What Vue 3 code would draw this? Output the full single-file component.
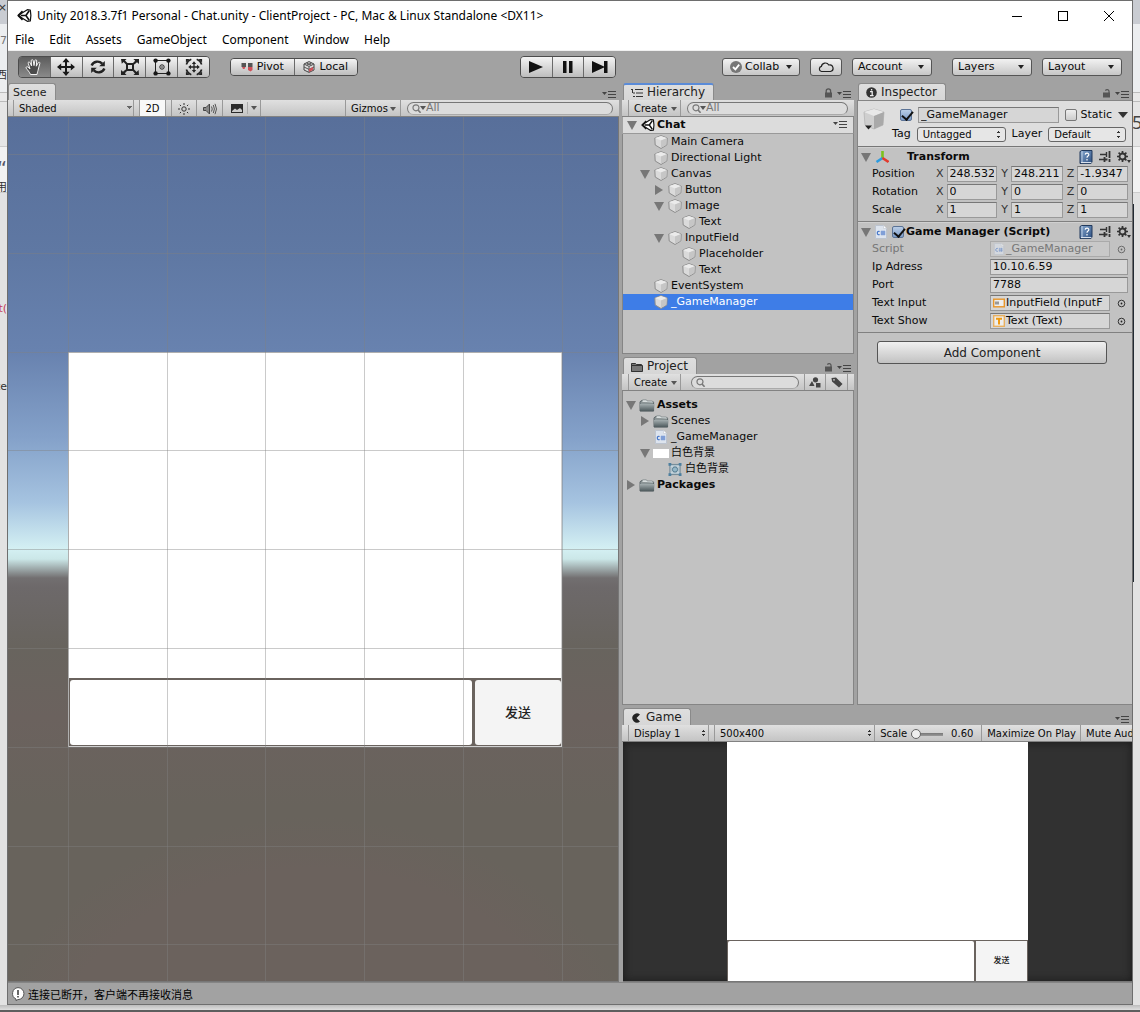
<script setup>
import { ref } from 'vue'

const menus = ['File', 'Edit', 'Assets', 'GameObject', 'Component', 'Window', 'Help']

const tools = ['hand', 'move', 'rotate', 'scale', 'rect', 'multi']
const activeTool = ref('hand')

const hierarchy = [
  { name: 'Main Camera', depth: 1 },
  { name: 'Directional Light', depth: 1 },
  { name: 'Canvas', depth: 1, arrow: 'open' },
  { name: 'Button', depth: 2, arrow: 'closed' },
  { name: 'Image', depth: 2, arrow: 'open' },
  { name: 'Text', depth: 3 },
  { name: 'InputField', depth: 2, arrow: 'open' },
  { name: 'Placeholder', depth: 3 },
  { name: 'Text', depth: 3 },
  { name: 'EventSystem', depth: 1 },
  { name: '_GameManager', depth: 1, selected: true },
]

const assets = [
  { name: 'Assets', depth: 0, arrow: 'open', icon: 'folder', bold: true },
  { name: 'Scenes', depth: 1, arrow: 'closed', icon: 'folder' },
  { name: '_GameManager', depth: 1, icon: 'csharp' },
  { name: '白色背景', depth: 1, arrow: 'open', icon: 'white' },
  { name: '白色背景', depth: 2, icon: 'sprite' },
  { name: 'Packages', depth: 0, arrow: 'closed', icon: 'folder', bold: true },
]

const transform = [
  { label: 'Position', x: '248.532', y: '248.211', z: '-1.9347' },
  { label: 'Rotation', x: '0', y: '0', z: '0' },
  { label: 'Scale', x: '1', y: '1', z: '1' },
]

const gridX = [60, 159, 257, 356, 455, 554]
const gridY = [37, 136, 235, 333, 432, 531, 630, 729, 827]
</script>

<template>
  <svg class="defs" aria-hidden="true">
    <defs>
      <linearGradient id="gFolder" x1="0" y1="0" x2="0" y2="1">
        <stop offset="0" stop-color="#a3adae" /><stop offset="1" stop-color="#4c585b" />
      </linearGradient>
      <linearGradient id="gBook" x1="0" y1="0" x2="1" y2="1">
        <stop offset="0" stop-color="#86a8d0" /><stop offset="1" stop-color="#2d4f80" />
      </linearGradient>
      <symbol id="unity" viewBox="0 0 16 16">
        <path d="M1 8 11 1.8 14.2 2.2 14.8 8 14.2 13.8 11 14.2Z" fill="#fff" stroke="#111" stroke-width="1.3" stroke-linejoin="round" />
        <path d="M1.500 8 6 3.500M1.500 8 6 12.500" stroke="#111" stroke-width="2" />
        <path d="M4 8H9.500M9.500 8 13 3M9.500 8 13 13" fill="none" stroke="#111" stroke-width="1.7" />
      </symbol>
      <symbol id="hand" viewBox="0 0 20 18">
        <path d="M6.5 16.5C5.6 14 3.4 12 2.2 10.2 1.6 9 3 8.3 4 9.1L6 11 4.2 5.2C3.9 3.8 5.5 3.4 6 4.7L7.6 8 7.2 2.8C7.2 1.4 8.9 1.2 9.2 2.6L10 7.6 10.9 2.6C11.2 1.3 12.9 1.5 12.7 3L12.3 8.2 14.2 4.8C14.9 3.7 16.3 4.3 15.8 5.6L14.4 11C14 13 13.4 14 13 16.5Z" fill="#4b4b4b" stroke="#f2f2f2" stroke-width="1" />
      </symbol>
      <symbol id="move" viewBox="0 0 18 18">
        <path d="M9 0 12.6 4.2H10V8H13.8V5.4L18 9 13.8 12.6V10H10V13.8H12.6L9 18 5.4 13.8H8V10H4.2V12.6L0 9 4.2 5.4V8H8V4.2H5.4Z" fill="#181818" />
      </symbol>
      <symbol id="rotate" viewBox="0 0 18 18">
        <path d="M2.6 7.500C4.400 3.200 10 2.400 13.2 5.6" fill="none" stroke="#222" stroke-width="2.4" />
        <path d="M15.8 3V8.2H10.200Z" fill="#222" />
        <path d="M15.4 10.500C13.600 14.800 8 15.600 4.8 12.4" fill="none" stroke="#222" stroke-width="2.4" />
        <path d="M2.2 15V9.8H7.800Z" fill="#222" />
      </symbol>
      <symbol id="scale" viewBox="0 0 18 18">
        <rect x="6" y="6" width="6" height="6" fill="none" stroke="#222" stroke-width="2" />
        <path d="M0 1H5.6L4 2.6 6.4 5 5 6.4 2.6 4 .8 5.8ZM18 1V6L16 4.2 13.4 6.4 12 5 14.2 2.8 12.4 1ZM0 17V12L2 13.8 4.6 11.6 6 13 3.8 15.2 5.6 17ZM18 17H12.4L14 15.4 11.8 13 13.2 11.6 15.6 14 17.6 12Z" fill="#222" />
      </symbol>
      <symbol id="rect" viewBox="0 0 18 18">
        <rect x="2.5" y="2.5" width="13" height="13" fill="none" stroke="#222" />
        <g fill="#181818"><circle cx="2.6" cy="2.6" r="2.2" /><circle cx="15.4" cy="2.6" r="2.2" /><circle cx="2.6" cy="15.4" r="2.2" /><circle cx="15.4" cy="15.4" r="2.2" /></g>
        <circle cx="9" cy="9" r="2.2" fill="none" stroke="#222" /><circle cx="9" cy="9" r=".7" />
      </symbol>
      <symbol id="multi" viewBox="0 0 20 20">
        <path d="M10 3.6 12.4 6.6H10.7V9.3H13.4V7.6L16.4 10 13.4 12.4V10.7H10.7V13.4H12.4L10 16.4 7.6 13.4H9.3V10.7H6.6V12.4L3.6 10 6.6 7.6V9.3H9.3V6.6H7.6Z" fill="#222" />
        <path d="M1.500 7.2C2.4 4.500 4.400 2.400 7 1.500M13 1.500C15.6 2.400 17.6 4.500 18.500 7.2M18.500 12.8C17.6 15.5 15.6 17.6 13 18.500M7 18.500C4.400 17.6 2.4 15.5 1.500 12.8" fill="none" stroke="#222" stroke-width="1.8" />
        <path d="M1 1H5L1 5ZM19 1V5L15 1ZM1 19V15L5 19ZM19 19H15L19 15Z" fill="#222" />
      </symbol>
      <symbol id="cube" viewBox="0 0 14 14">
        <path d="M7 .6 13.2 3 12.8 10 7 13.5 1.2 10 .8 3Z" fill="#dadada" stroke="#8c8c8c" />
        <path d="M7 .9 13 3.1 7 5.6 1 3.1Z" fill="#ebebeb" />
        <path d="M7 5.6 12.8 3.2 12.4 9.8 7 13Z" fill="#c6c6c6" />
      </symbol>
      <symbol id="menu" viewBox="0 0 14 8">
        <path d="M0 2H5L2.5 5Z" fill="#444" /><path d="M6 1.5H14M6 4.5H14M6 7.5H14" stroke="#444" />
      </symbol>
      <symbol id="lock" viewBox="0 0 9 10">
        <path d="M2.2 5V3A2.2 2.2 0 0 1 6.6 3V5" fill="none" stroke="#555" stroke-width="1.3" /><rect x="1" y="4.5" width="7" height="5" fill="#555" />
      </symbol>
      <symbol id="unlock" viewBox="0 0 9 10">
        <path d="M3.4 2.6A2 2 0 0 1 7 3V5" fill="none" stroke="#555" stroke-width="1.2" /><rect x="1" y="4.5" width="7" height="5" fill="#555" />
      </symbol>
      <symbol id="lens" viewBox="0 0 12 9">
        <circle cx="4" cy="3.800" r="3" fill="none" stroke="#777" stroke-width="1.2" /><path d="M6 6 8.600 8.800" stroke="#777" stroke-width="1.6" />
      </symbol>
      <symbol id="folder" viewBox="0 0 16 13">
        <path d="M1 12V3L2 1.8H6L7 3H14.6V12Z" fill="url(#gFolder)" stroke="#485255" stroke-width=".8" />
        <path d="M2.6 3.4 3.6.8H7.4L8.2 2H13.4L14.6 4Z" fill="#d8dede" stroke="#6a7476" stroke-width=".6" />
        <path d="M.8 5H15.4L14.8 12.2H1.2Z" fill="url(#gFolder)" />
      </symbol>
      <symbol id="csharp" viewBox="0 0 12 14">
        <path d="M.5 .5H8.5L11.5 3.5V13.5H.5Z" fill="#dde4ee" stroke="#bcc4d0" />
        <path d="M8.5 .5V3.5H11.5" fill="#fff" stroke="#c6ccd6" stroke-width=".7" />
        <path d="M4.600 6.4A1.6 1.8 0 1 0 4.600 9.600" fill="none" stroke="#3d6fc6" stroke-width="1.1" />
        <path d="M7 5.6V10.4M9 5.6V10.4M5.600 7H10.4M5.600 9H10.4" fill="none" stroke="#3d6fc6" stroke-width=".7" />
      </symbol>
      <symbol id="sprite" viewBox="0 0 16 14">
        <rect x="2.5" y="1.5" width="11" height="11" fill="#b4c6cf" stroke="#6d8592" />
        <path d="M3 2 13 12M13 2 3 12" stroke="#dbe5ea" /><circle cx="8" cy="7" r="2.8" fill="#94b7c8" stroke="#51788d" />
        <g fill="#4c7f9f"><rect x="1" width="3" height="3" /><rect x="12" width="3" height="3" /><rect x="1" y="11" width="3" height="3" /><rect x="12" y="11" width="3" height="3" /></g>
      </symbol>
      <symbol id="book" viewBox="0 0 14 14">
        <path d="M1 1.5 3 .5H13V12L12 13.5H1Z" fill="url(#gBook)" stroke="#20395c" />
        <path d="M3 1V12.5" stroke="#d4e0ee" stroke-width=".8" /><path d="M2 12.6H12.4" stroke="#e8eef5" />
        <path d="M6.2 4.6C6.4 2.6 10 2.8 9.8 4.8 9.7 6.2 8 6 8 7.8M8 9V10.4" fill="none" stroke="#fff" stroke-width="1.2" />
      </symbol>
      <symbol id="preset" viewBox="0 0 12 12">
        <path d="M1 3.500H7M7.500 1V6M0 8.500H5" stroke="#333" stroke-width="1.4" fill="none" />
        <path d="M10.500 0V7M5.500 6V11M6 8.500H8.500M10.500 8V11" stroke="#333" stroke-width="1.8" fill="none" />
      </symbol>
      <symbol id="gear" viewBox="0 0 14 12">
        <circle cx="5.5" cy="5.5" r="3" fill="none" stroke="#333" stroke-width="1.8" />
        <path d="M5.5 0V2M5.5 9V11M0 5.5H2M9 5.5H11M1.6 1.6 3 3M8 8 9.4 9.4M9.4 1.6 8 3M3 8 1.6 9.4" stroke="#333" stroke-width="1.7" />
        <path d="M10 9H14L12 12Z" fill="#333" />
      </symbol>
      <symbol id="picker" viewBox="0 0 9 9">
        <circle cx="4.5" cy="4.5" r="3.3" fill="none" stroke="#333" /><circle cx="4.5" cy="4.5" r=".9" fill="#222" />
      </symbol>
    </defs>
  </svg>

  <div class="desktop">
    <div class="edge left" aria-hidden="true">
      <i class="bit b1">×</i><i class="bit b2">7</i><i class="bit b3">西</i>
      <i class="bit b4">“</i><i class="bit b5">用</i><i class="bit b6">t(</i><i class="bit b7">te</i>
    </div>

    <main class="window">
      <header class="titlebar">
        <svg class="logo"><use href="#unity" /></svg>
        <h1>Unity 2018.3.7f1 Personal - Chat.unity - ClientProject - PC, Mac &amp; Linux Standalone &lt;DX11&gt;</h1>
        <button class="winbtn" aria-label="Minimize"><svg width="10" height="10"><path d="M0 5.5H10" stroke="#000" /></svg></button>
        <button class="winbtn" aria-label="Maximize"><svg width="10" height="10"><rect x=".5" y=".5" width="9" height="9" fill="none" stroke="#000" /></svg></button>
        <button class="winbtn" aria-label="Close"><svg width="10" height="10"><path d="M0 0 10 10M10 0 0 10" stroke="#000" /></svg></button>
      </header>

      <nav class="menubar">
        <button v-for="m in menus" :key="m">{{ m }}</button>
      </nav>

      <div class="toolbar">
        <div class="side">
          <div class="group tall toolset">
            <button v-for="t in tools" :key="t" :class="{ on: activeTool === t }" :aria-label="t" @click="activeTool = t">
              <svg class="tool"><use :href="'#' + t" /></svg>
            </button>
          </div>
          <div class="group pivot">
            <button>
              <svg width="12" height="10"><path d="M.5 1H5V5H.5ZM7 1H11.500V5H7Z" fill="#555" /><path d="M1 5H4.500L3.500 7H2ZM7 5H11.500V8L9.500 9.500 7 8Z" fill="#d05058" /></svg>
              Pivot
            </button>
            <button>
              <svg width="12" height="12"><path d="M6 .6 11 3V9L6 11.400 1 9V3Z" fill="#ddd" stroke="#444" /><path d="M1 3 6 5.400 11 3M6 5.400V11M3.500 2 8.500 4.200M8.500 2 3.500 4.200M1 6 6 8.400 11 6" stroke="#555" fill="none" /><path d="M6 8 10 6V9L6 11Z" fill="#d05058" /></svg>
              Local
            </button>
          </div>
        </div>
        <div class="group tall play">
          <button aria-label="Play"><svg width="16" height="14"><path d="M1 1 15 7 1 13Z" fill="#111" /></svg></button>
          <button aria-label="Pause"><svg width="10" height="12"><path d="M0 0H3.500V12H0ZM6 0H9.500V12H6Z" fill="#111" /></svg></button>
          <button aria-label="Step"><svg width="16" height="14"><path d="M0 1 12 6.500V1H15.500V13H12V7.500L0 13Z" fill="#111" /></svg></button>
        </div>
        <div class="side end">
          <button class="pill collab">
            <svg width="12" height="12"><circle cx="6" cy="6" r="6" fill="#777" /><path d="M3 6 5.400 8.400 9.200 3.600" fill="none" stroke="#fff" stroke-width="1.800" /></svg>
            Collab <b class="caret"></b>
          </button>
          <button class="pill cloud" aria-label="Services">
            <svg width="16" height="12"><path d="M3.500 10.500A2.600 2.600 0 0 1 3.400 5.400 4 4 0 0 1 10.800 4 3.300 3.300 0 0 1 12.500 10.500Z" fill="none" stroke="#222" stroke-width="1.200" /></svg>
          </button>
          <button class="pill menu-pill">Account <b class="caret"></b></button>
          <button class="pill menu-pill layers">Layers <b class="caret"></b></button>
          <button class="pill menu-pill">Layout <b class="caret"></b></button>
        </div>
      </div>

      <div class="docks">
        <section class="pane">
          <div class="tabs first"><h2 class="tab scene-tab">Scene</h2><svg class="pane-menu"><use href="#menu" /></svg></div>
          <div class="bar">
            <select class="flat shaded" aria-label="Draw mode"><option>Shaded</option></select>
            <button class="flat two-d">2D</button>
            <button class="flat ico sep-left" aria-label="Lighting">
              <svg width="12" height="12"><circle cx="6" cy="6" r="2.200" fill="none" stroke="#333" /><path d="M6 0V2M6 10V12M0 6H2M10 6H12M1.800 1.800 3 3M9 9 10.200 10.200M10.200 1.800 9 3M3 9 1.800 10.200" stroke="#333" /></svg>
            </button>
            <button class="flat ico" aria-label="Audio">
              <svg width="14" height="12"><path d="M.5 4.500H3L6.500 1V11L3 7.500H.5Z" fill="#888" stroke="#444" /><path d="M8.500 3.500Q10 6 8.500 8.500M10.300 2Q12.500 6 10.300 10M12 .8Q15 6 12 11.200" fill="none" stroke="#555" /></svg>
            </button>
            <button class="flat fx" aria-label="Effects">
              <svg width="12" height="9"><rect width="12" height="9" fill="#2b2b2b" /><path d="M1 7 4 4.500 6 6 9 4 11 6V8H1Z" fill="#ccc" /></svg>
              <span class="fx-more"><b class="caret small"></b></span>
            </button>
            <span class="grow"></span>
            <button class="flat gizmos">Gizmos <b class="caret small"></b></button>
            <label class="search scene-search"><svg><use href="#lens" /></svg><b class="caret small"></b><input type="text" placeholder="All" aria-label="Search scene"></label>
          </div>
          <div class="scene-view">
            <div class="ui-canvas">
              <div class="ui-image"></div>
              <div class="ui-row">
                <input class="ui-field" type="text" aria-label="Message">
                <button class="ui-send">发送</button>
              </div>
            </div>
            <svg class="grid" aria-hidden="true">
              <line v-for="x in gridX" :key="'x' + x" :x1="x" :x2="x" y1="0" y2="100%" />
              <line v-for="y in gridY" :key="'y' + y" :y1="y" :y2="y" x1="0" x2="100%" />
            </svg>
          </div>
        </section>

        <div class="right">
          <div class="upper">
            <div class="stack">
              <section class="pane">
                <div class="tabs">
                  <h2 class="tab focus">
                    <svg width="12" height="10"><path d="M0 1.500H2M4 1.500H12M2 5H4M5 5H12M2 8.500H4M5 8.500H12M1.500 2V5" stroke="#333" /></svg>Hierarchy
                  </h2>
                  <svg class="lock"><use href="#lock" /></svg><svg class="pane-menu"><use href="#menu" /></svg>
                </div>
                <div class="bar">
                  <button class="flat create">Create <b class="caret small"></b></button>
                  <label class="search"><svg><use href="#lens" /></svg><b class="caret small"></b><input type="text" placeholder="All" aria-label="Search hierarchy"></label>
                </div>
                <div class="scene-root">
                  <i class="arrow open"></i><svg class="unity-small"><use href="#unity" /></svg><span>Chat</span>
                  <svg class="pane-menu"><use href="#menu" /></svg>
                </div>
                <ul class="tree">
                  <li v-for="(n, i) in hierarchy" :key="i" :class="['d' + n.depth, { selected: n.selected }]">
                    <i class="arrow" :class="n.arrow"></i><svg class="cube"><use href="#cube" /></svg>{{ n.name }}
                  </li>
                </ul>
              </section>

              <section class="pane">
                <div class="tabs">
                  <h2 class="tab">
                    <svg width="12" height="10"><path d="M.5 9.500V1.500H4.500L5.500 2.500H10.500V4" fill="#777" stroke="#333" /><path d="M.5 3.500H11.500V9.500H.5Z" fill="#777" stroke="#333" /></svg>Project
                  </h2>
                  <svg class="lock"><use href="#unlock" /></svg><svg class="pane-menu"><use href="#menu" /></svg>
                </div>
                <div class="bar">
                  <button class="flat create">Create <b class="caret small"></b></button>
                  <label class="search proj"><svg><use href="#lens" /></svg><input type="text" aria-label="Search project"></label>
                  <button class="flat sq" aria-label="Search by type"><svg width="12" height="11"><circle cx="6.500" cy="2.800" r="2.600" fill="#444" /><path d="M0 9 3 4 5.500 9Z" fill="#444" /><rect x="7" y="6" width="4.500" height="4.500" fill="#444" /></svg></button>
                  <button class="flat sq" aria-label="Search by label"><svg width="12" height="11"><path d="M.5 1 5 .5 11.500 7 8 10.500 1 4.500Z" fill="#444" /><circle cx="3" cy="2.800" r=".9" fill="#ccc" /></svg></button>
                </div>
                <ul class="tree project">
                  <li v-for="(a, i) in assets" :key="i" :class="['d' + a.depth, { bold: a.bold }]">
                    <i class="arrow" :class="a.arrow"></i>
                    <span v-if="a.icon === 'white'" class="thumb"></span>
                    <svg v-else :class="a.icon"><use :href="'#' + a.icon" /></svg>{{ a.name }}
                  </li>
                </ul>
              </section>
            </div>

            <section class="pane">
              <div class="tabs">
                <h2 class="tab">
                  <svg width="11" height="11"><circle cx="5.500" cy="5.500" r="5.300" fill="#333" /><path d="M4 4.700H6.200V8.500M4 8.600H7.600M5.600 2V3.400" stroke="#eee" stroke-width="1.300" fill="none" /></svg>Inspector
                </h2>
                <svg class="lock"><use href="#unlock" /></svg><svg class="pane-menu"><use href="#menu" /></svg>
              </div>
              <div class="inspector">
                <div class="object-head">
                  <div class="big-cube"><svg width="24" height="24" viewBox="0 0 24 24"><path d="M12 1 22 4 21 17 12 21 3 17 2 4Z" fill="#cfcfcf" stroke="#aaa" stroke-width=".6" /><path d="M12 1 22 4 12 8 2 4Z" fill="#e8e8e8" /><path d="M12 8 22 4 21 17 12 21Z" fill="#a9a9a9" /><path d="M3 17.500H10L6.500 21.500Z" fill="#222" /></svg></div>
                  <div class="object-lines">
                    <div class="line">
                      <input class="check" type="checkbox" checked aria-label="Active">
                      <input class="field name" type="text" value="_GameManager" aria-label="Name">
                      <label class="static"><input class="check" type="checkbox">Static</label><b class="caret big"></b>
                    </div>
                    <div class="line second">
                      <label for="tag">Tag</label><select id="tag" class="popup tag"><option>Untagged</option></select>
                      <label for="layer">Layer</label><select id="layer" class="popup layer"><option>Default</option></select>
                    </div>
                  </div>
                </div>

                <div class="component">
                  <div class="comp-head">
                    <i class="arrow open"></i>
                    <svg class="axes" width="15" height="14"><path d="M7.500 8V1" stroke="#7cc21c" stroke-width="2.600" /><path d="M7.500 8 1.500 12" stroke="#2c9be0" stroke-width="2.600" /><path d="M7.500 8 13.500 12" stroke="#e23b2e" stroke-width="2.600" /></svg>
                    <h3 class="plain">Transform</h3>
                    <svg class="book"><use href="#book" /></svg><svg class="preset"><use href="#preset" /></svg><svg class="gear"><use href="#gear" /></svg>
                  </div>
                  <div v-for="r in transform" :key="r.label" class="prop">
                    <span class="label vec">{{ r.label }}</span>
                    <label class="axis">X<input class="field" type="text" :value="r.x"></label>
                    <label class="axis">Y<input class="field" type="text" :value="r.y"></label>
                    <label class="axis">Z<input class="field" type="text" :value="r.z"></label>
                  </div>
                </div>

                <div class="component">
                  <div class="comp-head">
                    <i class="arrow open"></i><svg class="script"><use href="#csharp" /></svg>
                    <input class="check" type="checkbox" checked aria-label="Enabled">
                    <h3>Game Manager (Script)</h3>
                    <svg class="book"><use href="#book" /></svg><svg class="preset"><use href="#preset" /></svg><svg class="gear"><use href="#gear" /></svg>
                  </div>
                  <div class="prop dim">
                    <span class="label">Script</span>
                    <button class="field object" disabled><svg class="mini"><use href="#csharp" /></svg>_GameManager</button>
                    <svg class="picker"><use href="#picker" /></svg>
                  </div>
                  <div class="prop"><label class="label" for="ip">Ip Adress</label><input id="ip" class="field" type="text" value="10.10.6.59"></div>
                  <div class="prop"><label class="label" for="port">Port</label><input id="port" class="field" type="text" value="7788"></div>
                  <div class="prop">
                    <span class="label">Text Input</span>
                    <button class="field object"><svg class="mini" viewBox="0 0 12 12"><rect x=".7" y="2.200" width="10.600" height="7.600" fill="#eee" stroke="#e8962a" stroke-width="1.400" /><path d="M3 4.500V7.500M5 4.500V7.500" stroke="#444" /></svg>InputField (InputF</button>
                    <svg class="picker"><use href="#picker" /></svg>
                  </div>
                  <div class="prop">
                    <span class="label">Text Show</span>
                    <button class="field object"><svg class="mini" viewBox="0 0 12 12"><rect x=".7" y=".7" width="10.600" height="10.600" fill="#eee" stroke="#e8b060" stroke-width="1.400" /><path d="M3 3.800H9M6 3.800V9.500" stroke="#f09a10" stroke-width="2" /></svg>Text (Text)</button>
                    <svg class="picker"><use href="#picker" /></svg>
                  </div>
                </div>
                <button class="add">Add Component</button>
              </div>
            </section>
          </div>

          <section class="pane">
            <div class="tabs">
              <h2 class="tab">
                <svg width="11" height="10"><path d="M9 1.500A4.600 4.600 0 1 0 9 8.500L5.500 5Z" fill="#222" /></svg>Game
              </h2>
              <svg class="pane-menu"><use href="#menu" /></svg>
            </div>
            <div class="bar game-bar">
              <select class="flat updown display" aria-label="Display"><option>Display 1</option></select>
              <select class="flat updown size" aria-label="Resolution"><option>500x400</option></select>
              <label class="flat zoom">Scale <input type="range" min="0" max="100" value="0"><output>0.60</output></label>
              <button class="flat">Maximize On Play</button>
              <button class="flat mute">Mute Audio</button>
            </div>
            <div class="game-view">
              <div class="game-canvas">
                <div class="game-image"></div>
                <div class="game-row">
                  <input class="game-field" type="text" aria-label="Message">
                  <button class="game-send">发送</button>
                </div>
              </div>
            </div>
          </section>
        </div>
      </div>

      <footer class="status">
        <svg width="14" height="14"><path d="M7 .6A6 6 0 1 1 6.900 12.600L5 13.600V12A6 6 0 0 1 7 .6Z" fill="#fff" stroke="#555" /><path d="M7 3V8M7 9V10.500" stroke="#444" stroke-width="1.600" /></svg>
        连接已断开，客户端不再接收消息
      </footer>
    </main>

    <div class="edge rightside" aria-hidden="true"><i class="bit r1">5</i><i class="dark"></i></div>
    <div class="below" aria-hidden="true"></div>
  </div>
</template>

<style>
body { margin: 0; background: #e6e6e6; }
</style>

<style scoped>
* { box-sizing: border-box; }
.defs { position: absolute; width: 0; height: 0; }
.desktop {
  display: grid; grid-template-columns: 7px minmax(0, 1fr) 7px; grid-template-rows: 1fr 7px;
  min-height: 100vh; overflow: hidden; background: #e6e6e6;
  font: 11px/16px "DejaVu Sans", Verdana, "Noto Sans CJK SC", sans-serif; color: #0a0a0a;
}
button, input, select { font: inherit; color: inherit; margin: 0; padding: 0; border: 0; background: none; border-radius: 0; outline: 0; min-width: 0; }
select { appearance: none; }
svg { flex: none; display: block; }
h1, h2, h3, ul { margin: 0; padding: 0; font-size: inherit; font-weight: normal; }

.edge { position: relative; overflow: hidden; background: linear-gradient(#c9ccd2 24px, #eceef0 24px, #eceef0 92px, #bbb 92px, #bbb 93px, #e9e9e9 93px, #e9e9e9 101px, #bbb 101px, #bbb 102px, #e6e6e6 102px, #e6e6e6 146px, #ccc 146px, #ccc 147px, #f2f2f2 147px, #f2f2f2 192px, #ccc 192px, #ccc 193px, #e2e2e2 193px); }
.bit { position: absolute; right: 0; font-style: normal; color: #333; white-space: nowrap; }
.b1 { top: 0; } .b2 { top: 33px; color: #777; } .b3 { top: 68px; }
.b4 { top: 160px; font-size: 20px; color: #556; } .b5 { top: 180px; } .b6 { top: 301px; color: #c33a5a; } .b7 { top: 379px; }
.r1 { top: 114px; left: -1px; right: auto; font-family: "Noto Sans", sans-serif; font-size: 18px; color: #444; }
.dark { position: absolute; left: 0; top: 204px; width: 1px; height: 378px; background: #222a33; }
.below { grid-column: 1 / -1; background: linear-gradient(#bdbdbd, #dedede 5px, #5e5e5e 5px); }

.window { display: flex; flex-direction: column; min-width: 0; border: 1px solid #6e6e6e; background: #a2a2a2; }
.titlebar { display: flex; align-items: center; height: 29px; background: #fff; padding-left: 9px; }
.logo { width: 15px; height: 15px; }
h1 { flex: 1; margin-left: 5px; font: 12px/16px "Noto Sans", "Segoe UI", sans-serif; color: #000; white-space: nowrap; overflow: hidden; }
.winbtn { width: 46px; height: 29px; display: flex; align-items: center; justify-content: center; }
.menubar { display: flex; gap: 15px; height: 21px; padding: 0 7px; background: #fff; border-bottom: 1px solid #f0f0f0; font: 12px/20px "Noto Sans", "Segoe UI", sans-serif; color: #000; }

.toolbar { display: flex; align-items: center; height: 32px; padding: 0 10px; }
.side { flex: 1; display: flex; align-items: center; gap: 20px; }
.side.end { justify-content: flex-end; gap: 10px; }
.group { display: flex; border: 1px solid #4c4c4c; border-radius: 4px; height: 18px; overflow: hidden; }
.group button { display: flex; align-items: center; justify-content: center; gap: 4px; flex: 1; border-left: 1px solid #6a6a6a; background: linear-gradient(#f4f4f4, #bdbdbd); }
.group button:first-child { border-left: 0; }
.group.tall { height: 22px; }
.group button.on { background: linear-gradient(#5c5c5c, #8a8a8a); }
.toolset { width: 192px; }
.pivot { width: 128px; }
.play { width: 96px; margin-right: 4px; }
.tool { width: 20px; height: 18px; }
.pill { display: flex; align-items: center; height: 18px; border: 1px solid #555; border-radius: 3px; background: linear-gradient(#f2f2f2, #c6c6c6); padding: 0 7px 0 5px; gap: 3px; }
.collab { width: 78px; padding-left: 7px; }
.cloud { width: 32px; padding: 0 7px; }
.menu-pill { width: 80px; }
.layers { margin-left: 10px; }
.caret { margin-left: auto; border: 3px solid transparent; border-top: 4px solid #222; border-bottom: 0; }
.caret.small { border-width: 4px 3px 0; border-top-color: #555; }
.caret.big { border-width: 6px 5px 0; border-top-color: #333; }

.docks { flex: 1; display: grid; grid-template-columns: 611fr 510fr; gap: 3px; }
.right { display: flex; flex-direction: column; gap: 3px; min-width: 0; }
.right > .pane { height: 274px; }
.upper { flex: 1; display: grid; grid-template-columns: 232fr 275fr; gap: 3px; }
.stack { display: grid; grid-template-rows: 271fr 348fr; gap: 3px; min-width: 0; }
.pane { display: flex; flex-direction: column; min-width: 0; }
.tabs { display: flex; align-items: flex-end; height: 17px; padding: 0 3px 0 1px; }
.tabs.first { padding-left: 0; }
.tab { display: flex; align-items: center; gap: 4px; height: 17px; margin-right: auto; padding: 1px 8px 0 7px; border: 1px solid #8a8a8a; border-bottom: 0; border-radius: 3px 3px 0 0; background: linear-gradient(#dedede, #d6d6d6); color: #222; font-size: 12px; line-height: 15px; }
.scene-tab { padding-left: 4px; font-size: 11px; }
.focus { border-top: 2px solid #5a8bd8; padding-top: 0; }
.pane-menu { width: 14px; height: 8px; margin-bottom: 2px; }
.lock { width: 9px; height: 10px; margin: 0 4px 2px; }
.bar { display: flex; align-items: center; height: 17px; padding-left: 6px; border-bottom: 1px solid #828282; background: linear-gradient(#e0e0e0, #c4c4c4); font-size: 10px; overflow: hidden; white-space: nowrap; }
.flat { display: flex; align-items: center; justify-content: center; height: 17px; padding-top: 1px; flex: none; border-right: 1px solid #999; }
.bar > .flat:first-child { border-left: 1px solid #999; }
.shaded { width: 121px; padding-left: 5px; background: linear-gradient(#666, #666) 114px 7px / 3px 1px no-repeat, linear-gradient(#666, #666) 113px 6px / 5px 1px no-repeat, linear-gradient(#666, #666) 115px 8px / 1px 1px no-repeat; }
.bar > .shaded { margin-left: -1px; }
.two-d { width: 27px; margin: 0 5px; border-left: 1px solid #999; background: #f8f8f8; }
.ico { width: 26px; }
.sep-left { border-left: 1px solid #999; }
.fx { width: 38px; padding: 0 3px 0 8px; }
.fx-more { margin-left: auto; padding-left: 3px; border-left: 1px solid #aaa; height: 12px; display: flex; align-items: center; }
.grow { flex: 1; }
.gizmos { width: 56px; padding: 1px 4px 0 5px; border-left: 1px solid #999; }
.create { width: 53px; padding: 1px 3px 0 5px; }
.search { display: flex; align-items: center; flex: 1; height: 13px; margin: 0 6px; padding-left: 4px; border: 1px solid #777; border-bottom-color: #aaa; border-radius: 7px; background: #dcdcdc; color: #777; font-size: 11px; min-width: 0; }
.search svg { width: 12px; height: 9px; }
.search .caret { margin: 0 0 0 -4px; }
.search input { flex: 1; width: 0; height: 12px; }
.search input::placeholder { color: #777; opacity: 1; }
.scene-search { flex: none; width: 206px; }
.proj { margin: 0 5px 0 10px; }
.sq { width: 22px; }
.proj + .sq { border-left: 1px solid #999; }
.sq:last-child { margin-right: 6px; }

.scene-view {
  position: relative; flex: 1; min-height: 720px; overflow: hidden; border: 1px solid #777; border-width: 0 1px 1px 0;
  background:
    radial-gradient(ellipse 330px 260px at 50% 960px, #6b625d 80%, #6b625d00 100%),
    linear-gradient(#586f9a, #5f78a3 136px, #6882af 235px, #84a1c9 320px, #a5c3e0 385px, #d4f0f3 432px, #cbe7e8 442px, #726f70 461px, #6d696a 470px, #68645e 530px, #6b625e 600px, #68635c 690px);
}
.ui-canvas { position: absolute; left: 60px; top: 235px; width: 494px; height: 395px; display: flex; flex-direction: column; background: #6a635e; border: 1px solid #d0d0d0; }
.ui-image { flex: 1; background: #fff; }
.ui-row { display: flex; gap: 3px; height: 68px; padding: 2px 0 1px 1px; }
.ui-field { flex: 1; background: #fff; border-radius: 3px; }
.ui-send { width: 86px; background: #f4f4f4; border-radius: 3px; font-size: 13px; font-weight: 500; color: #222; }
.grid { position: absolute; inset: 0; width: 100%; height: 100%; shape-rendering: crispEdges; stroke: #808080; stroke-opacity: .42; }

.scene-root { display: flex; align-items: center; height: 17px; margin-left: 1px; padding: 0 6px 0 4px; background: #dcdcdc; border-bottom: 1px solid #999; border-right: 1px solid #888; font-weight: bold; }
.scene-root span { flex: 1; }
.unity-small { width: 14px; height: 14px; margin: 0 2px 0 4px; }
.arrow { flex: none; width: 10px; height: 10px; }
.arrow.open { background: #777; clip-path: polygon(0 1px, 100% 1px, 50% 100%); }
.arrow.closed { background: #777; clip-path: polygon(1px 0, 9px 50%, 1px 100%); }
.tree { flex: 1; list-style: none; background: #c2c2c2; border: 1px solid #858585; border-top: 0; }
.project { padding-top: 6px; }
.tree li { display: flex; align-items: center; height: 16px; padding-left: 3px; white-space: nowrap; }
.tree .d1 { padding-left: 17px; }
.tree .d2 { padding-left: 31px; }
.tree .d3 { padding-left: 45px; }
.tree .selected { background: #3e7de7; color: #fff; }
.bold { font-weight: bold; }
.cube { width: 14px; height: 14px; margin: 0 3px 0 4px; }
.folder, .sprite { width: 16px; height: 13px; margin: 0 2px 0 3px; }
.tree .csharp { width: 12px; height: 14px; margin: 0 4px 0 5px; }
.thumb { width: 16px; height: 9px; margin: 0 2px 0 3px; background: #fff; }

.inspector { flex: 1; background: #c2c2c2; border: 1px solid #858585; border-right: 0; }
.object-head { display: flex; height: 46px; padding: 6px 4px 0 4px; background: #dedede; border-bottom: 1px solid #777; }
.big-cube { width: 24px; padding-top: 1px; }
.object-lines { flex: 1; min-width: 0; display: flex; flex-direction: column; gap: 3px; }
.line { display: flex; align-items: center; height: 16px; gap: 6px; }
.line .check { margin-left: 14px; }
.static .check { margin: 0; }
.static { display: flex; align-items: center; gap: 4px; }
.line .caret { margin: 0; }
.second { padding-left: 6px; }
.check { appearance: none; flex: none; width: 12px; height: 12px; border: 1px solid #777; border-radius: 2px; background: linear-gradient(#eee, #ccc); position: relative; }
.check:checked { background: linear-gradient(#b9cde6, #7d9cc8); border-color: #5b7396; }
.check:checked::after { content: ""; position: absolute; left: 3px; top: -1px; width: 5px; height: 9px; border: solid #111; border-width: 0 2px 2px 0; transform: rotate(40deg); }
.field { flex: 1; width: 0; height: 16px; padding: 0 2px; border: 1px solid #999; border-top-color: #777; background: #d6d6d6; overflow: hidden; white-space: nowrap; }
.popup { height: 15px; padding-left: 5px; border: 1px solid #666; border-radius: 3px; font-size: 10px; line-height: 13px; flex: 1; }
.tag { flex: 88; width: 0; }
.layer { flex: 76; width: 0; margin-right: 2px; }
.popup, .updown {
  background-image: linear-gradient(#333, #333), linear-gradient(#333, #333), linear-gradient(#333, #333), linear-gradient(#333, #333);
  background-size: 1px 1px, 3px 1px, 3px 1px, 1px 1px;
  background-position: right 6px top 3px, right 5px top 4px, right 5px top 8px, right 6px top 9px;
  background-repeat: no-repeat; background-color: #e6e6e6;
}
.component { padding: 1px 4px 2px 3px; border-bottom: 1px solid #808080; border-top: 1px solid #d0d0d0; }
.comp-head { display: flex; align-items: center; height: 16px; }
.axes, .script { width: 14px; height: 14px; margin-left: 4px; }
.script { width: 12px; margin-right: 5px; }
h3 { flex: 1; margin-left: 2px; font-weight: bold; font-size: 11px; white-space: nowrap; }
.plain { margin-left: 18px; }
.book { width: 14px; height: 14px; }
.preset { width: 12px; height: 12px; margin: 0 6px; }
.gear { width: 14px; height: 12px; margin-right: -3px; }
.prop { display: flex; align-items: center; height: 18px; padding-left: 11px; }
.component + .component .prop { height: 18px; }
.label { width: 118px; flex: none; }
.vec { width: 60px; }
.axis { flex: 1; display: flex; align-items: center; gap: 3px; color: #333; padding-left: 4px; min-width: 0; }
.axis .field { color: #0a0a0a; }
.dim { color: #777; }
.dim .field { background: #c8c8c8; border-color: #aaa; }
.object { display: flex; align-items: center; gap: 1px; }
.mini { width: 12px; height: 12px; }
.dim .mini, .dim .picker { opacity: .6; }
.picker { width: 9px; height: 9px; margin: 0 2px 0 7px; }
.add { display: block; width: calc(100% - 44px); height: 23px; margin: 8px auto 0 19px; border: 1px solid #555; border-radius: 3px; background: linear-gradient(#f0f0f0, #c2c2c2); font-size: 12px; color: #222; }

.updown { background-color: transparent; background-position: right 4px top 5px, right 3px top 6px, right 3px top 9px, right 4px top 10px; }
.display { width: 81px; padding-left: 5px; margin-right: 5px; }
.size { flex: 1; padding-left: 5px; border-left: 1px solid #999; }
.game-bar button { padding: 1px 4px 0 5px; }
.zoom { width: 107px; gap: 4px; padding-left: 5px; justify-content: flex-start; overflow: hidden; }
.zoom output { margin-left: 4px; }
.zoom input { appearance: none; width: 32px; height: 10px; background: linear-gradient(#777, #999) 0 4px / 100% 3px no-repeat; }
.zoom input::-webkit-slider-thumb { appearance: none; width: 10px; height: 10px; border: 1px solid #666; border-radius: 5px; background: #eee; }
.bar > .mute { width: 51px; justify-content: flex-start; overflow: hidden; border: 0; }
.game-view { flex: 1; display: flex; justify-content: center; margin-left: 1px; background: #313131; box-shadow: inset 0 0 8px #1a1a1a; border-bottom: 1px solid #777; }
.game-canvas { width: 301px; display: flex; flex-direction: column; background: #6a635e; }
.game-image { flex: 1; background: #fff; }
.game-row { display: flex; gap: 2px; height: 41px; padding: 1px 1px 0; }
.game-field { flex: 1; background: #fff; border-radius: 2px 2px 0 0; }
.game-send { width: 51px; background: #f4f4f4; font-size: 8px; font-weight: 500; color: #222; }

.status { display: flex; align-items: center; gap: 3px; height: 22px; padding: 0 3px; border-top: 1px solid #858585; font: 11px/16px "Noto Sans CJK SC", sans-serif; color: #000; }
</style>
